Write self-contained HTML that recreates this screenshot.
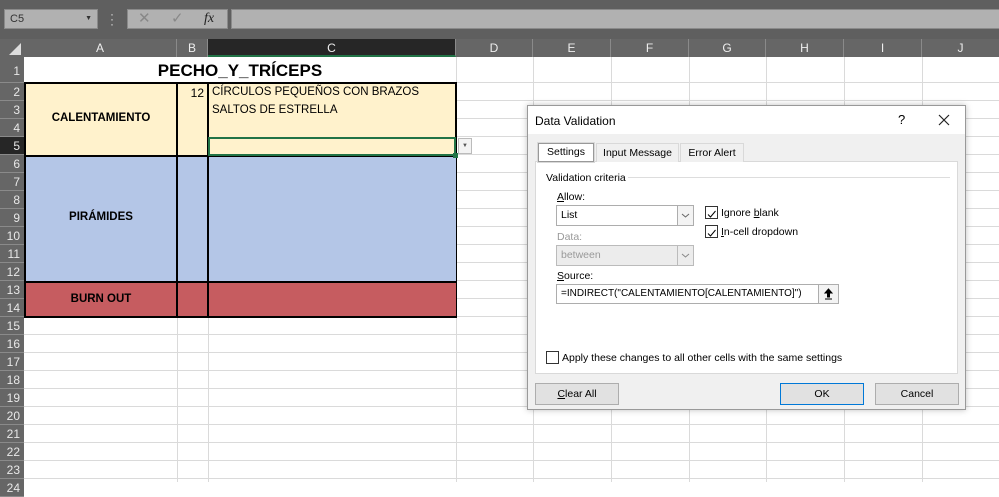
<!DOCTYPE html>
<html><head><meta charset="utf-8"><style>
*{margin:0;padding:0;box-sizing:border-box}
body{width:999px;height:482px;overflow:hidden;position:relative;background:#fff;font-family:"Liberation Sans",sans-serif}
.a{position:absolute}
.rh{position:absolute;left:0;width:24px;height:18px;background:#666;color:#e8e8e8;font-size:12px;text-align:right;padding-right:4px;line-height:18px;border-bottom:1px solid #8a8a8a}
.ch{position:absolute;top:39px;height:18px;color:#eee;font-size:12px;text-align:center;line-height:18px;border-right:1px solid #8a8a8a}
.vl{position:absolute;top:57px;width:1px;height:425px;background:#dadada}
.d{font-size:10.5px;color:#000;white-space:nowrap}
.cb{position:absolute;width:13px;height:13px;border:1px solid #333;background:#fff}
.btn{position:absolute;height:22px;background:#e1e1e1;border:1px solid #adadad;font-size:10.5px;text-align:center;line-height:20px}
.chev{position:absolute;right:0;top:0;width:16px;height:19px;border-left:1px solid #adadad;background:#f3f3f3}
</style></head><body>
<div class="a" style="left:0;top:0;width:999px;height:39px;background:#5f5f5f"></div>
<div class="a" style="left:4px;top:9px;width:94px;height:20px;background:#b1b1b1;border:1px solid #8a8a8a;font-size:11px;color:#333;padding-left:5px;line-height:18px">C5<span style="position:absolute;right:5px;top:0;font-size:7px">▼</span></div>
<div class="a" style="left:110px;top:12px;width:3px;height:14px;color:#ddd;font-size:12px;line-height:5px">·<br>·<br>·</div>
<div class="a" style="left:127px;top:9px;width:101px;height:20px;background:#b1b1b1;border:1px solid #8a8a8a;color:#888;font-size:15px;line-height:18px"><span style="position:absolute;left:10px">✕</span><span style="position:absolute;left:43px">✓</span><span style="position:absolute;left:76px;color:#222;font-family:'Liberation Serif',serif;font-style:italic;font-size:14px">fx</span></div>
<div class="a" style="left:231px;top:9px;width:770px;height:20px;background:#b1b1b1;border:1px solid #8a8a8a"></div>
<div class="a" style="left:0;top:39px;width:999px;height:18px;background:#666"></div>
<div class="a" style="left:9px;top:43px;width:0;height:0;border-left:12px solid transparent;border-bottom:12px solid #ddd"></div>
<div class="ch" style="left:24px;width:153px">A</div>
<div class="ch" style="left:177px;width:31px">B</div>
<div class="ch" style="left:208px;width:248px;background:#262626;border-bottom:2px solid #217346">C</div>
<div class="ch" style="left:456px;width:77px">D</div>
<div class="ch" style="left:533px;width:78px">E</div>
<div class="ch" style="left:611px;width:78px">F</div>
<div class="ch" style="left:689px;width:77px">G</div>
<div class="ch" style="left:766px;width:78px">H</div>
<div class="ch" style="left:844px;width:78px">I</div>
<div class="ch" style="left:922px;width:78px">J</div>
<div class="a" style="left:24px;top:82px;width:975px;height:400px;background:repeating-linear-gradient(to bottom,#dadada 0,#dadada 1px,transparent 1px,transparent 18px)"></div>
<div class="vl" style="left:177px"></div><div class="vl" style="left:208px"></div><div class="vl" style="left:456px"></div>
<div class="vl" style="left:533px"></div><div class="vl" style="left:611px"></div><div class="vl" style="left:689px"></div>
<div class="vl" style="left:766px"></div><div class="vl" style="left:844px"></div><div class="vl" style="left:922px"></div>
<div class="rh" style="top:57px;height:26px;line-height:28px">1</div>
<div class="rh" style="top:83px">2</div><div class="rh" style="top:101px">3</div><div class="rh" style="top:119px">4</div>
<div class="rh" style="top:137px;background:#262626">5</div><div class="rh" style="top:155px">6</div><div class="rh" style="top:173px">7</div>
<div class="rh" style="top:191px">8</div><div class="rh" style="top:209px">9</div><div class="rh" style="top:227px">10</div>
<div class="rh" style="top:245px">11</div><div class="rh" style="top:263px">12</div><div class="rh" style="top:281px">13</div>
<div class="rh" style="top:299px">14</div><div class="rh" style="top:317px">15</div><div class="rh" style="top:335px">16</div>
<div class="rh" style="top:353px">17</div><div class="rh" style="top:371px">18</div><div class="rh" style="top:389px">19</div>
<div class="rh" style="top:407px">20</div><div class="rh" style="top:425px">21</div><div class="rh" style="top:443px">22</div>
<div class="rh" style="top:461px">23</div><div class="rh" style="top:479px">24</div>
<div class="a" style="left:24px;top:57px;width:432px;height:26px;background:#fff;text-align:center;font-weight:bold;font-size:17px;line-height:28px">PECHO_Y_TRÍCEPS</div>
<div class="a" style="left:24px;top:82px;width:433px;height:236px;border:2px solid #000;background:#fff2cc"></div>
<div class="a" style="left:26px;top:155px;width:430px;height:126px;background:#b4c6e7;border-top:2px solid #000"></div>
<div class="a" style="left:26px;top:281px;width:430px;height:35px;background:#c65c60;border-top:2px solid #000"></div>
<div class="a" style="left:176px;top:84px;width:2px;height:233px;background:#000"></div>
<div class="a" style="left:207px;top:84px;width:2px;height:233px;background:#000"></div>
<div class="a" style="left:26px;top:112px;width:150px;text-align:center;font-weight:bold;font-size:11.5px">CALENTAMIENTO</div>
<div class="a" style="left:26px;top:211px;width:150px;text-align:center;font-weight:bold;font-size:11.5px">PIRÁMIDES</div>
<div class="a" style="left:26px;top:293px;width:150px;text-align:center;font-weight:bold;font-size:11.5px">BURN OUT</div>
<div class="a" style="left:178px;top:86px;width:26px;text-align:right;font-size:12px">12</div>
<div class="a" style="left:212px;top:86px;font-size:11.5px">CÍRCULOS PEQUEÑOS CON BRAZOS</div>
<div class="a" style="left:212px;top:104px;font-size:11.5px">SALTOS DE ESTRELLA</div>
<div class="a" style="left:208px;top:137px;width:248px;height:19px;border:2px solid #217346"></div>
<div class="a" style="left:453px;top:153px;width:5px;height:5px;background:#217346"></div>
<div class="a" style="left:458px;top:138px;width:14px;height:16px;background:#f3f3f3;border:1px solid #bbb;font-size:6px;text-align:center;line-height:14px;color:#555">▼</div>
<div class="a" style="left:527px;top:105px;width:439px;height:305px;background:#f0f0f0;border:1px solid #999;box-shadow:0 0 6px rgba(0,0,0,.25)">
 <div class="a" style="left:0;top:0;width:437px;height:28px;background:#fff"></div>
 <div class="a d" style="left:7px;top:8px;font-size:12px">Data Validation</div>
 <div class="a d" style="left:370px;top:6px;font-size:13px">?</div>
 <svg class="a" style="left:410px;top:8px" width="12" height="12"><path d="M1 1L11 11M11 1L1 11" stroke="#222" stroke-width="1.2"/></svg>
 <div class="a" style="left:7px;top:55px;width:423px;height:213px;background:#fff;border:1px solid #d9d9d9"></div>
 <div class="a d" style="left:10px;top:37px;width:56px;height:19px;background:#fff;border:1px solid #999;outline:1px solid #d9d9d9;text-align:center;line-height:17px">Settings</div>
 <div class="a d" style="left:68px;top:37px;width:83px;height:19px;border:1px solid #d9d9d9;border-bottom:none;text-align:center;line-height:18px;background:#f0f0f0">Input Message</div>
 <div class="a d" style="left:152px;top:37px;width:64px;height:19px;border:1px solid #d9d9d9;border-bottom:none;text-align:center;line-height:18px;background:#f0f0f0">Error Alert</div>
 <div class="a d" style="left:18px;top:66px">Validation criteria</div>
 <div class="a" style="left:100px;top:71px;width:322px;height:1px;background:#ddd"></div>
 <div class="a d" style="left:29px;top:85px"><u>A</u>llow:</div>
 <div class="a d" style="left:28px;top:99px;width:138px;height:21px;background:#fff;border:1px solid #adadad;padding-left:4px;line-height:19px">List<div class="chev"><svg width="15" height="19"><path d="M4 8L7.5 11L11 8" stroke="#666" fill="none"/></svg></div></div>
 <div class="a d" style="left:29px;top:125px;color:#999">Data:</div>
 <div class="a d" style="left:28px;top:139px;width:138px;height:21px;background:#ececec;border:1px solid #bbb;padding-left:4px;line-height:19px;color:#999">between<div class="chev" style="background:#ececec;border-color:#bbb"><svg width="15" height="19"><path d="M4 8L7.5 11L11 8" stroke="#888" fill="none"/></svg></div></div>
 <div class="a d" style="left:29px;top:164px"><u>S</u>ource:</div>
 <div class="a d" style="left:28px;top:178px;width:283px;height:20px;background:#fff;border:1px solid #adadad;padding-left:4px;line-height:18px;font-size:10px;overflow:hidden">=INDIRECT("CALENTAMIENTO[CALENTAMIENTO]")<div class="a" style="right:0;top:0;width:20px;height:18px;border-left:1px solid #adadad;background:#f3f3f3"><svg width="19" height="18"><path d="M9.5 4L6 8H8.5V12H10.5V8H13Z M6 14H13" stroke="#000" fill="#000" stroke-width="1"/></svg></div></div>
 <div class="cb" style="left:177px;top:100px"><svg width="11" height="11"><path d="M2 5.5L4.5 8L9.5 2" stroke="#000" fill="none"/></svg></div>
 <div class="a d" style="left:193px;top:101px">Ignore <u>b</u>lank</div>
 <div class="cb" style="left:177px;top:119px"><svg width="11" height="11"><path d="M2 5.5L4.5 8L9.5 2" stroke="#000" fill="none"/></svg></div>
 <div class="a d" style="left:193px;top:120px"><u>I</u>n-cell dropdown</div>
 <div class="cb" style="left:18px;top:245px"></div>
 <div class="a d" style="left:34px;top:246px">Apply these changes to all other cells with the same settings</div>
 <div class="btn" style="left:7px;top:277px;width:84px"><u>C</u>lear All</div>
 <div class="btn" style="left:252px;top:277px;width:84px;border:1px solid #0078d7">OK</div>
 <div class="btn" style="left:347px;top:277px;width:84px">Cancel</div>
</div>
</body></html>
